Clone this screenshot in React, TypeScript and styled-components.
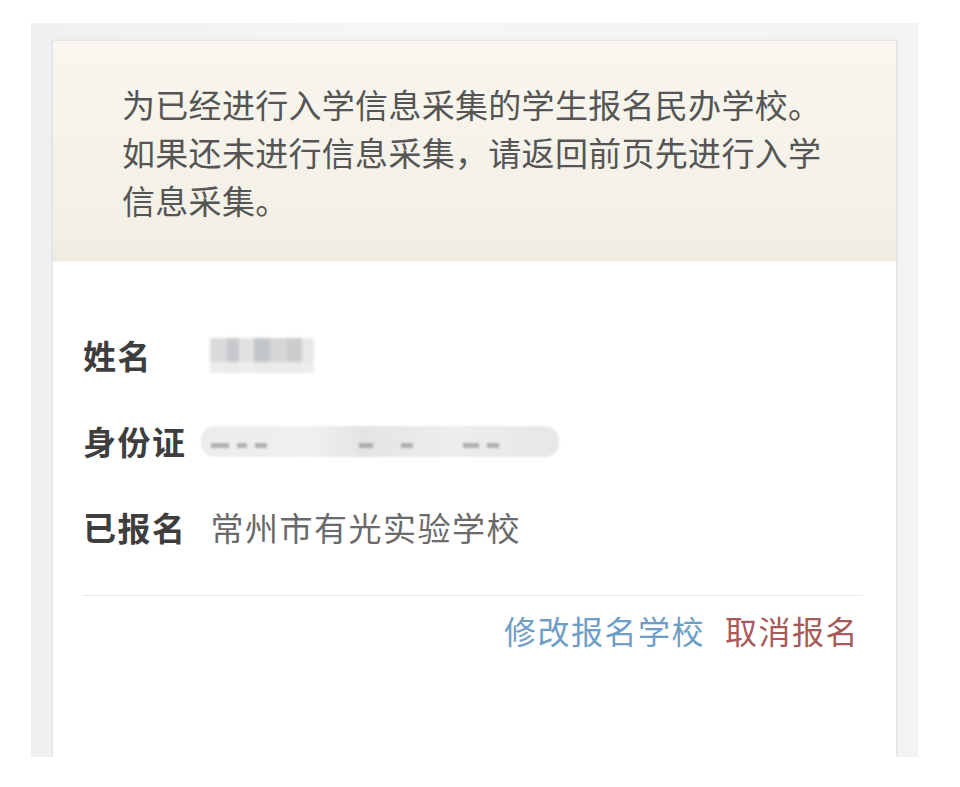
import styled, { createGlobalStyle } from "styled-components";

const GlobalStyle = createGlobalStyle`
  html, body {
    margin: 0;
    padding: 0;
    background: #ffffff;
  }
  body {
    font-family: "Noto Sans CJK SC", "Noto Sans", sans-serif;
  }
`;

const Page = styled.div`
  padding: 23px 0 0 31px;
`;

const Panel = styled.div`
  width: 845px;
  height: 717px;
  padding: 17px 21px 0 21px;
  background: linear-gradient(90deg, #f0f0f2 0%, #f6f6f7 40%, #f3f3f5 100%);
  display: flex;
`;

const Card = styled.div`
  flex: 1;
  display: flex;
  flex-direction: column;
  background: #ffffff;
  border: 1px solid #e4e4e6;
  border-bottom: none;
  box-shadow: 0 0 3px rgba(0, 0, 0, 0.06);
`;

const Notice = styled.div`
  height: 220px;
  box-sizing: border-box;
  padding: 39px 20px 0 69px;
  background: linear-gradient(180deg, #f8f6ee 0%, #f3f0e6 85%, #eeebe1 100%);
  box-shadow: 0 1px 2px rgba(0, 0, 0, 0.06);
  color: #555555;
  font-size: 33px;
  letter-spacing: 0.3px;
  line-height: 48px;
  white-space: nowrap;
`;

const Body = styled.div`
  display: flex;
  flex-direction: column;
  padding: 51px 33px 0 30px;
`;

const Row = styled.div`
  display: flex;
  align-items: center;
  height: 86px;
`;

const Label = styled.span<{ $gap: number }>`
  font-size: 33px;
  font-weight: 700;
  letter-spacing: 1.5px;
  color: #3e3e3e;
  margin-right: ${(p) => p.$gap}px;
`;

const Value = styled.span`
  font-size: 33px;
  letter-spacing: 1.5px;
  color: #6a6a6a;
`;

const NameBlur = styled.span`
  display: inline-block;
  width: 104px;
  height: 35px;
  background:
    linear-gradient(180deg, rgba(255, 255, 255, 0) 0 70%, rgba(235, 235, 237, 0.9) 70% 100%),
    linear-gradient(90deg, #d4d4d7 0 16%, #bfc0c4 16% 28%, #dedee0 28% 42%, #b9bdbf 42% 58%, #cfcfd2 58% 74%, #c4c4c7 74% 88%, #e4e4e6 88% 100%);
  filter: blur(1.5px);
  opacity: 0.85;
`;

const IdBlur = styled.span`
  display: inline-block;
  position: relative;
  width: 358px;
  height: 31px;
  border-radius: 14px;
  background: linear-gradient(90deg, #ececee 0%, #f0f0f1 30%, #e4e4e6 45%, #ededee 70%, #e7e7e9 100%);
  filter: blur(1px);
`;

const Dash = styled.span<{ $left: number; $width: number }>`
  position: absolute;
  top: 17px;
  left: ${(p) => p.$left}px;
  width: ${(p) => p.$width}px;
  height: 5px;
  background: #8a8a8a;
  opacity: 0.6;
`;

const Divider = styled.div`
  height: 1px;
  background: #ebebeb;
  margin-top: 25px;
`;

const Actions = styled.div`
  display: flex;
  justify-content: flex-end;
  gap: 20px;
  padding: 10px 4px 0 0;
`;

const ActionLink = styled.a<{ $tone: "blue" | "red" }>`
  font-size: 32px;
  line-height: 48px;
  text-decoration: none;
  cursor: pointer;
  letter-spacing: 1.5px;
  color: ${(p) => (p.$tone === "blue" ? "#6c9ec8" : "#a85a5a")};
`;

export default function App() {
  return (
    <>
      <GlobalStyle />
      <Page>
        <Panel>
          <Card>
            <Notice>
              为已经进行入学信息采集的学生报名民办学校。
              <br />
              如果还未进行信息采集，请返回前页先进行入学
              <br />
              信息采集。
            </Notice>
            <Body>
              <Row>
                <Label $gap={58}>姓名</Label>
                <NameBlur />
              </Row>
              <Row>
                <Label $gap={14}>身份证</Label>
                <IdBlur>
                  <Dash $left={10} $width={18} />
                  <Dash $left={36} $width={10} />
                  <Dash $left={54} $width={12} />
                  <Dash $left={158} $width={14} />
                  <Dash $left={200} $width={12} />
                  <Dash $left={262} $width={16} />
                  <Dash $left={286} $width={12} />
                </IdBlur>
              </Row>
              <Row>
                <Label $gap={24}>已报名</Label>
                <Value>常州市有光实验学校</Value>
              </Row>
              <Divider />
              <Actions>
                <ActionLink $tone="blue">修改报名学校</ActionLink>
                <ActionLink $tone="red">取消报名</ActionLink>
              </Actions>
            </Body>
          </Card>
        </Panel>
      </Page>
    </>
  );
}
